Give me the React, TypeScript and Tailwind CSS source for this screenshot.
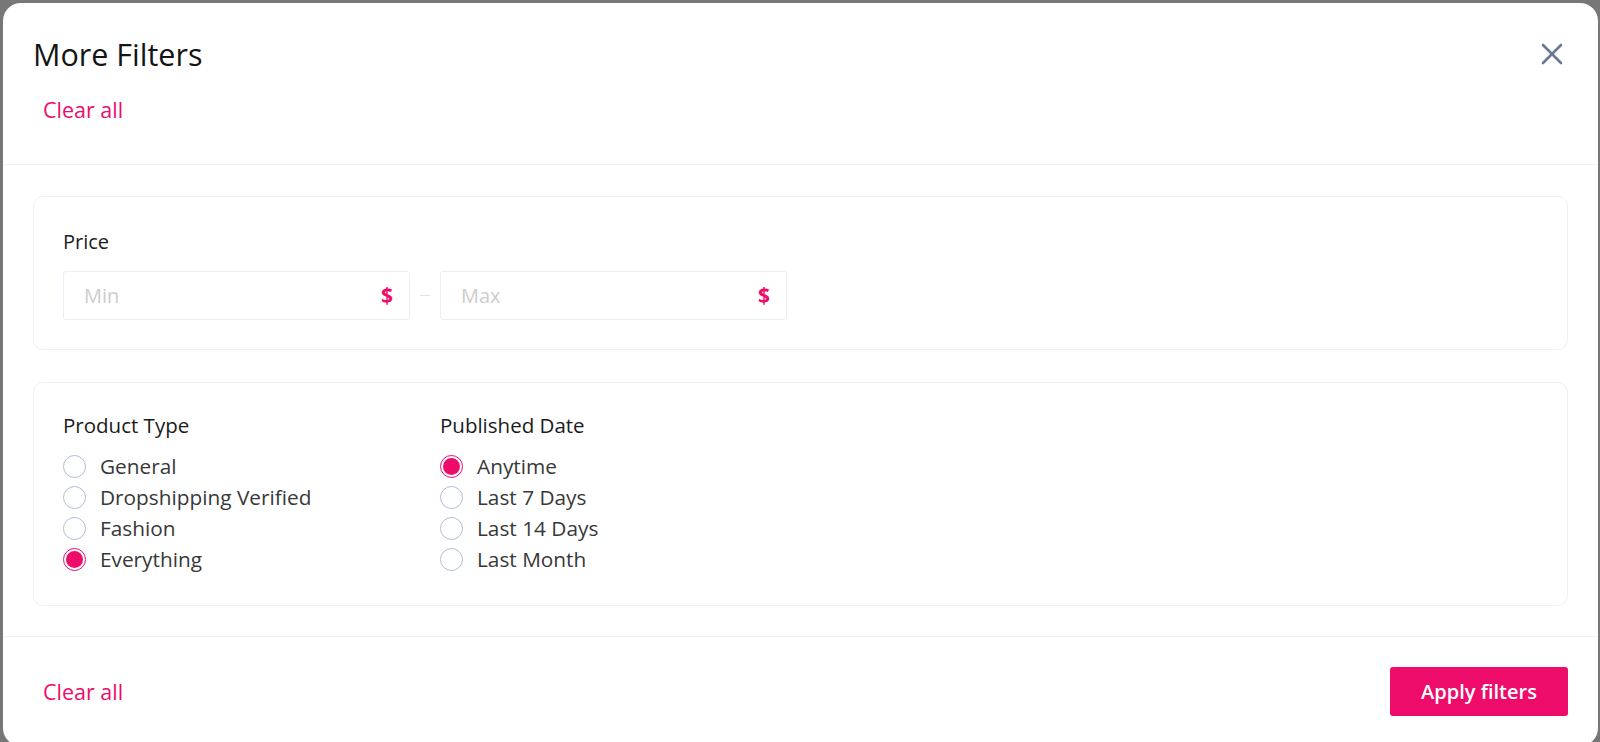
import { useState } from 'react';

const PINK = '#ED0C6A';

const PRODUCT_TYPES = ['General', 'Dropshipping Verified', 'Fashion', 'Everything'];
const PUBLISHED_DATES = ['Anytime', 'Last 7 Days', 'Last 14 Days', 'Last Month'];

function CloseIcon() {
  return (
    <svg width="22" height="22" viewBox="0 0 22 22" fill="none">
      <path d="M2 2L20 20M20 2L2 20" stroke="#6B7799" strokeWidth="2.6" strokeLinecap="round" />
    </svg>
  );
}

function Radio({ label, checked, onClick }: { label: string; checked: boolean; onClick: () => void }) {
  return (
    <button type="button" onClick={onClick} className="flex h-[31px] items-center gap-[14px] text-left">
      {checked ? (
        <span className="flex h-[23px] w-[23px] items-center justify-center rounded-full border border-[#ED0C6A] bg-white">
          <span className="h-[17px] w-[17px] rounded-full bg-[#ED0C6A]" />
        </span>
      ) : (
        <span className="h-[23px] w-[23px] rounded-full border border-[#AEBBDA] bg-white" />
      )}
      <span className="text-[20.8px] leading-none text-[#383838]">{label}</span>
    </button>
  );
}

function RadioGroup({ title, options, initial }: { title: string; options: string[]; initial: string }) {
  const [value, setValue] = useState(initial);
  return (
    <div>
      <h3 className="mb-[12px] text-[20.5px] font-medium leading-[27px] text-[#1b1b1b]">{title}</h3>
      <div className="flex flex-col">
        {options.map((o) => (
          <Radio key={o} label={o} checked={value === o} onClick={() => setValue(o)} />
        ))}
      </div>
    </div>
  );
}

function PriceInput({ placeholder }: { placeholder: string }) {
  return (
    <div className="flex h-[49px] items-center justify-between rounded-[3px] border border-[#EAEFF7] bg-white pl-[20px] pr-[16px]">
      <input
        placeholder={placeholder}
        className="w-full bg-transparent text-[20px] text-[#333] outline-none placeholder:text-[#CDCDCD]"
      />
      <span className="text-[21px] font-bold leading-none text-[#ED0C6A]">$</span>
    </div>
  );
}

export default function App() {
  return (
    <div
      className="min-h-[742px] bg-[#777777] pl-[3px] pt-[3px]"
      style={{ fontFamily: '"Open Sans", "Liberation Sans", sans-serif' }}
    >
      <div className="w-[1595px] overflow-hidden rounded-[18px] bg-white">
        {/* Header */}
        <div className="px-[30px] pb-[40px] pt-[30px]">
          <div className="flex items-start justify-between">
            <h2 className="text-[30.5px] leading-[42px] text-[#151515]">More Filters</h2>
            <button type="button" className="mr-[5px] mt-[10px]">
              <CloseIcon />
            </button>
          </div>
          <button type="button" className="mt-[21px] pl-[10px] text-[21.5px] leading-[27px] text-[#ED0C6A]">
            Clear all
          </button>
        </div>

        {/* Body */}
        <div className="flex flex-col gap-[32px] border-y border-[#EEF2F8] px-[30px] pb-[30px] pt-[31px]">
          <section className="rounded-[10px] border border-[#EDF1F7] px-[29px] pb-[29px] pt-[31px]">
            <h3 className="text-[20px] font-medium leading-[27px] text-[#1b1b1b]">Price</h3>
            <div className="mt-[16px] grid grid-cols-[347px_30px_347px] items-center">
              <PriceInput placeholder="Min" />
              <div className="mx-auto h-px w-[10px] bg-[#E3E3E3]" />
              <PriceInput placeholder="Max" />
            </div>
          </section>

          <section className="rounded-[10px] border border-[#EDF1F7] px-[29px] pb-[30px] pt-[29px]">
            <div className="grid grid-cols-[377px_377px]">
              <RadioGroup title="Product Type" options={PRODUCT_TYPES} initial="Everything" />
              <RadioGroup title="Published Date" options={PUBLISHED_DATES} initial="Anytime" />
            </div>
          </section>
        </div>

        {/* Footer */}
        <div className="flex items-center justify-between px-[30px] pb-[30px] pt-[30px]">
          <button type="button" className="pl-[10px] text-[21.5px] leading-[27px] text-[#ED0C6A]">
            Clear all
          </button>
          <button
            type="button"
            className="h-[49px] w-[178px] rounded-[3px] text-[20px] font-semibold text-white"
            style={{ backgroundColor: PINK }}
          >
            Apply filters
          </button>
        </div>
      </div>
    </div>
  );
}
